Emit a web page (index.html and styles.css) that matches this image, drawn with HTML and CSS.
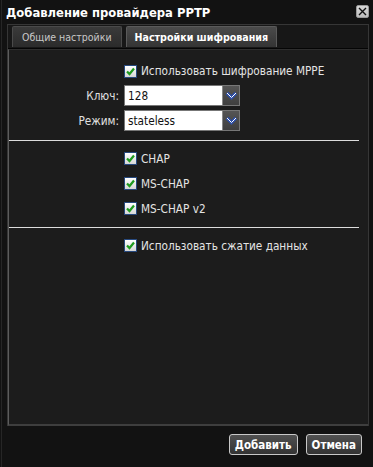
FILE: index.html
```
<!DOCTYPE html>
<html lang="ru">
<head>
    <meta charset="UTF-8">
    <title>Добавление провайдера PPTP</title>
    <link rel="stylesheet" href="styles.css">
</head>
<body>
<div class="window">
    <div class="titlebar">
        <span class="title">Добавление провайдера PPTP</span>
        <span class="close">
            <svg width="11" height="11" viewBox="0 0 11 11"><path d="M2 2 L9 9 M9 2 L2 9" stroke="#111" stroke-width="1.4" fill="none"/></svg>
        </span>
    </div>

    <div class="tabwrap">
        <div class="tabbar">
            <div class="tab general">Общие настройки</div>
            <div class="tab active">Настройки шифрования</div>
        </div>
        <div class="panel">
            <div class="row first">
                <span class="lbl"></span>
                <span class="check"><span class="cb"><svg width="11" height="11" viewBox="0 0 11 11"><path d="M2 5.5 L4.5 8 L9 2.5" stroke="#1f9b1f" stroke-width="2.2" fill="none"/></svg></span>Использовать шифрование MPPE</span>
            </div>
            <div class="row sel-row">
                <span class="lbl">Ключ:</span>
                <span class="select"><span class="value">128</span><span class="arrow"><svg width="13" height="9" viewBox="0 0 13 9"><path d="M2 2 L6.5 6.5 L11 2" stroke="#2d4fa8" stroke-width="3.4" fill="none"/><path d="M2 2 L6.5 6.5 L11 2" stroke="#fff" stroke-width="1" fill="none"/></svg></span></span>
            </div>
            <div class="row sel-row">
                <span class="lbl">Режим:</span>
                <span class="select"><span class="value">stateless</span><span class="arrow"><svg width="13" height="9" viewBox="0 0 13 9"><path d="M2 2 L6.5 6.5 L11 2" stroke="#2d4fa8" stroke-width="3.4" fill="none"/><path d="M2 2 L6.5 6.5 L11 2" stroke="#fff" stroke-width="1" fill="none"/></svg></span></span>
            </div>

            <div class="sep"></div>

            <div class="row auth">
                <span class="lbl"></span>
                <span class="check"><span class="cb"><svg width="11" height="11" viewBox="0 0 11 11"><path d="M2 5.5 L4.5 8 L9 2.5" stroke="#1f9b1f" stroke-width="2.2" fill="none"/></svg></span>CHAP</span>
            </div>
            <div class="row auth">
                <span class="lbl"></span>
                <span class="check"><span class="cb"><svg width="11" height="11" viewBox="0 0 11 11"><path d="M2 5.5 L4.5 8 L9 2.5" stroke="#1f9b1f" stroke-width="2.2" fill="none"/></svg></span>MS-CHAP</span>
            </div>
            <div class="row auth">
                <span class="lbl"></span>
                <span class="check"><span class="cb"><svg width="11" height="11" viewBox="0 0 11 11"><path d="M2 5.5 L4.5 8 L9 2.5" stroke="#1f9b1f" stroke-width="2.2" fill="none"/></svg></span>MS-CHAP v2</span>
            </div>

            <div class="sep second-sep"></div>

            <div class="row auth">
                <span class="lbl"></span>
                <span class="check"><span class="cb"><svg width="11" height="11" viewBox="0 0 11 11"><path d="M2 5.5 L4.5 8 L9 2.5" stroke="#1f9b1f" stroke-width="2.2" fill="none"/></svg></span>Использовать сжатие данных</span>
            </div>
        </div>
    </div>

    <div class="buttons">
        <button class="btn">Добавить</button>
        <button class="btn">Отмена</button>
    </div>
</div>
</body>
</html>
```

FILE: styles.css
```
html, body {
    margin: 0;
    padding: 0;
}
body {
    background-color: #121212;
    font-family: "DejaVu Sans Condensed", "DejaVu Sans", sans-serif;
    font-size: 11.7px;
    color: #e2e2e2;
}
.window {
    height: 467px;
    box-sizing: border-box;
    border-left: 1px solid #262626;
    margin-left: 1px;
    width: 372px;
}

/* title */
.titlebar {
    height: 24px;
    display: flex;
    align-items: center;
    justify-content: space-between;
    padding: 0 3px 0 4px;
    box-sizing: border-box;
}
.title {
    font-weight: bold;
    font-size: 12.9px;
    color: #ffffff;
    margin-top: 1px;
}
.close {
    width: 13px;
    height: 13px;
    box-sizing: border-box;
    background: linear-gradient(#d8d8d8, #bdbdbd);
    border: 1px solid #9a9a9a;
    border-radius: 2px;
    display: flex;
    align-items: center;
    justify-content: center;
    margin-top: -2px;
    margin-right: 1px;
}

/* tabs */
.tabwrap {
    margin: 0 4px 0 5px;
    border: 1px solid #363636;
    border-bottom: none;
}
.tabbar {
    display: flex;
    gap: 4px;
    padding: 1px 4px 0 4px;
    height: 22px;
    border-bottom: 1px solid #050505;
    background-color: #171717;
}
.tab {
    height: 21px;
    box-sizing: border-box;
    padding: 0 8px;
    display: flex;
    align-items: center;
    border: 1px solid #4a4a4a;
    border-bottom: none;
    border-radius: 2px 2px 0 0;
    background: linear-gradient(#3a3a3a, #2b2b2b);
    color: #c8c8c8;
    font-size: 10.5px;
}
.tab.general {
    padding: 0 9px;
}
.tab.active {
    background: linear-gradient(#4a4a4a, #343434);
    border-color: #5a5a5a;
    color: #ffffff;
    font-weight: bold;
    font-size: 10.6px;
}
.panel {
    height: 377px;
    background-color: #1c1c1c;
    border-left: 1px solid #5c5c5c;
    border-top: 1px solid #2e2e2e;
    border-bottom: 2px solid #3e3e3e;
    padding-top: 11px;
    box-sizing: border-box;
}

/* form rows */
.row {
    display: flex;
    align-items: center;
    height: 20px;
}
.lbl {
    width: 110px;
    text-align: right;
    margin-right: 5px;
    color: #e0e0e0;
}
.sel-row {
    height: 21px;
    margin-top: 4px;
}
.check {
    display: flex;
    align-items: center;
    gap: 4px;
    color: #e4e4e4;
}
.cb {
    width: 13px;
    height: 13px;
    box-sizing: border-box;
    border: 1px solid #27497e;
    background: linear-gradient(#ffffff, #d6d6d6);
    display: flex;
    align-items: center;
    justify-content: center;
}
.select {
    display: flex;
    width: 116px;
    height: 21px;
    box-sizing: border-box;
    border: 1px solid #777;
    background-color: #ffffff;
}
.select .value {
    flex: 1;
    color: #111;
    padding-left: 3px;
    display: flex;
    align-items: center;
}
.select .arrow {
    width: 16px;
    background: linear-gradient(#555, #3f3f3f);
    border-left: 1px solid #888;
    display: flex;
    align-items: center;
    justify-content: center;
}

.sep {
    height: 1px;
    background-color: #dcdcdc;
    margin: 9px 9px 5px 0;
}
.second-sep {
    margin-top: 6px;
}
.auth {
    height: 25px;
}

/* bottom buttons */
.buttons {
    display: flex;
    justify-content: flex-end;
    gap: 8px;
    padding: 8px 11px 0 0;
}
.btn {
    height: 21px;
    padding: 0 5px;
    font-family: "DejaVu Sans Condensed", "DejaVu Sans", sans-serif;
    font-size: 11.5px;
    font-weight: bold;
    color: #ffffff;
    background: linear-gradient(#505050, #333333);
    border: 1px solid #c8c8c8;
    border-radius: 3px;
}
```
